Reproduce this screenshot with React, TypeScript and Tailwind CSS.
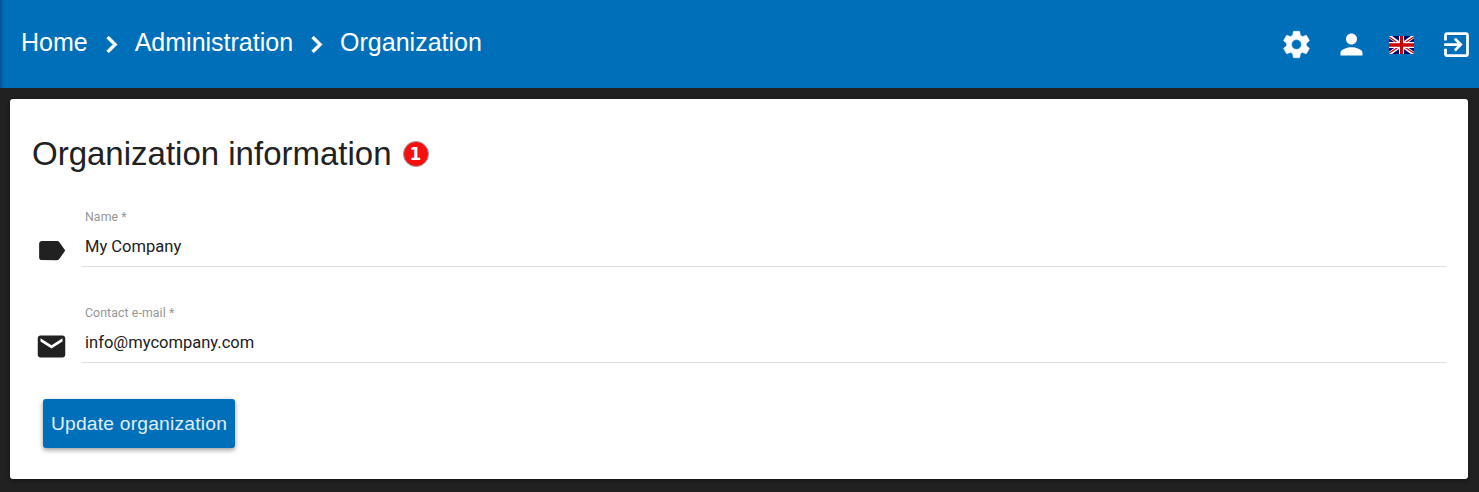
import React from "react";

const iconPaths = {
  chevron: "M10 6L8.59 7.41 13.17 12l-4.58 4.59L10 18l6-6z",
  gear: "M19.14 12.94c.04-.3.06-.61.06-.94 0-.32-.02-.64-.07-.94l2.03-1.58c.18-.14.23-.41.12-.61l-1.92-3.32c-.12-.22-.37-.29-.59-.22l-2.39.96c-.5-.38-1.03-.7-1.62-.94l-.36-2.54c-.04-.24-.24-.41-.48-.41h-3.84c-.24 0-.43.17-.47.41l-.36 2.54c-.59.24-1.13.57-1.62.94l-2.39-.96c-.22-.08-.47 0-.59.22L2.74 8.87c-.12.21-.08.47.12.61l2.03 1.58c-.05.3-.09.63-.09.94s.02.64.07.94l-2.03 1.58c-.18.14-.23.41-.12.61l1.92 3.32c.12.22.37.29.59.22l2.39-.96c.5.38 1.03.7 1.62.94l.36 2.54c.05.24.24.41.48.41h3.84c.24 0 .44-.17.47-.41l.36-2.54c.59-.24 1.13-.56 1.62-.94l2.39.96c.22.08.47 0 .59-.22l1.92-3.32c.12-.22.07-.47-.12-.61l-2.01-1.58zM12 15.6c-1.98 0-3.6-1.62-3.6-3.6s1.62-3.6 3.6-3.6 3.6 1.62 3.6 3.6-1.62 3.6-3.6 3.6z",
  person: "M12 12c2.21 0 4-1.79 4-4s-1.79-4-4-4-4 1.79-4 4 1.79 4 4 4zm0 2c-2.67 0-8 1.34-8 4v2h16v-2c0-2.66-5.33-4-8-4z",
  exit: "M10.09 15.59L11.5 17l5-5-5-5-1.41 1.41L12.67 11H3v2h9.67l-2.58 2.59zM19 3H5c-1.11 0-2 .9-2 2v4h2V5h14v14H5v-4H3v4c0 1.1.89 2 2 2h14c1.1 0 2-.9 2-2V5c0-1.1-.9-2-2-2z",
  label: "M17.63 5.84C17.27 5.33 16.67 5 16 5L5 5.01C3.9 5.01 3 5.9 3 7v10c0 1.1.9 1.99 2 1.99L16 19c.67 0 1.27-.33 1.63-.84L22 12l-4.37-6.16z",
  mail: "M20 4H4c-1.1 0-1.99.9-1.99 2L2 18c0 1.1.9 2 2 2h16c1.1 0 2-.9 2-2V6c0-1.1-.9-2-2-2zm0 4.4l-8 5-8-5V6l8 5 8-5v2.4z",
};

function Icon({ name, className = "" }: { name: keyof typeof iconPaths; className?: string }) {
  return (
    <svg viewBox="0 0 24 24" className={`size-[33px] shrink-0 fill-current ${className}`} aria-hidden="true">
      <path d={iconPaths[name]} />
    </svg>
  );
}

function Flag() {
  return (
    <svg viewBox="0 0 25 18" className="h-[18px] w-[25px]" aria-hidden="true">
      <path fill="#00006b" d="M0 0h25v18H0z" />
      <path stroke="#fff" strokeWidth="3.6" d="M0 0l25 18M25 0L0 18" />
      <path stroke="#cc0000" strokeWidth="1.2" d="M0 .7l12.5 9M12.5 9L25 17.3M25 .7L12.5 9M12.5 9L0 17.3" />
      <path fill="#fff" d="M10 0h5v18h-5zM0 6h25v6H0z" />
      <path fill="#cc0000" d="M11 0h3v18h-3zM0 7.3h25v3.4H0z" />
    </svg>
  );
}

function Field({ icon, label, value }: { icon: "label" | "mail"; label: string; value: string }) {
  return (
    <div className="flex h-24 items-start">
      <Icon name={icon} className="mt-[30px] text-[#212121]" />
      <div className="ml-[14px] flex h-[63px] flex-1 flex-col border-b border-[#dedede] pl-[3px] font-[Roboto,sans-serif]">
        <span className="mt-[5px] text-[12.3px] leading-[16px] tracking-[0.1px] text-[#969696]">{label}</span>
        <span className="mt-[12px] text-[16.55px] leading-[20px] text-[#212121]">{value}</span>
      </div>
    </div>
  );
}

export default function App() {
  return (
    <div className="flex h-[492px] flex-col bg-[#212121] font-['Liberation_Sans',Arial,sans-serif]">
      <header className="flex h-[88px] items-center justify-between bg-[#006fba] pr-[6px] pl-[21px] text-white shadow-[inset_4px_0_4px_-3px_rgba(0,0,0,0.35)]">
        <nav className="mb-[3px] flex items-center gap-[7px] text-[25px] leading-[33px]">
          <span>Home</span>
          <Icon name="chevron" className="mt-[4px] stroke-current stroke-[0.6]" />
          <span>Administration</span>
          <Icon name="chevron" className="mt-[4px] stroke-current stroke-[0.6]" />
          <span>Organization</span>
        </nav>
        <div className="mt-px flex items-center gap-[22px]">
          <Icon name="gear" className="stroke-current stroke-[0.4]" />
          <Icon name="person" />
          <div className="-ml-[5px] flex w-[33px] justify-center"><Flag /></div>
          <Icon name="exit" />
        </div>
      </header>
      <main className="mr-[11px] ml-[10px] mt-[11px] h-[380px] rounded-[3px] bg-white pr-[22px] pl-[25px] shadow-[0_2px_4px_rgba(0,0,0,0.35)]">
        <div className="flex items-center pt-[35px]">
          <h1 className="-ml-[3px] text-[33px] leading-[40px] text-[#212121]">Organization information</h1>
          <span className="ml-[11px] flex size-[26px] items-center justify-center rounded-full border border-[#999] bg-[#f90d0d] font-['DejaVu_Sans',sans-serif] text-[17px] leading-none font-bold text-white">1</span>
        </div>
        <div className="mt-[30px]">
          <Field icon="label" label="Name *" value="My Company" />
          <Field icon="mail" label="Contact e-mail *" value="info@mycompany.com" />
        </div>
        <button className="mt-[3px] ml-2 h-[49px] w-[192px] rounded-[3px] bg-[#006fba] pt-[2px] text-[19.25px] tracking-[0.2px] whitespace-nowrap text-[#e0edf6] shadow-[0_2px_5px_rgba(0,0,0,0.4)]">
          Update organization
        </button>
      </main>
    </div>
  );
}
